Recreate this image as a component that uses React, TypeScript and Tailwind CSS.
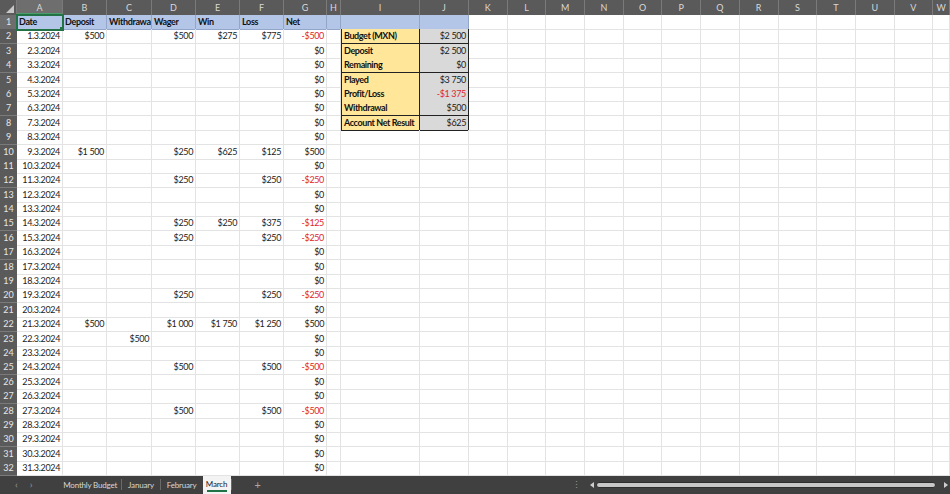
import React from 'react';

// column template: row header, A-J, K-V, W (partial)
const GRID =
  'grid grid-cols-[17px_46px_44px_45px_44px_44px_44px_43px_14px_79px_49px_repeat(12,38.7px)_1fr]';

const LETTERS = ['A', 'B', 'C', 'D', 'E', 'F', 'G', 'H', 'I', 'J', 'K', 'L', 'M', 'N', 'O', 'P', 'Q', 'R', 'S', 'T', 'U', 'V', 'W'];

type Row = { b?: string; c?: string; d?: string; e?: string; f?: string; g: string };

const DAYS: Row[] = [
  { b: '$500', d: '$500', e: '$275', f: '$775', g: '-$500' },
  { g: '$0' },
  { g: '$0' },
  { g: '$0' },
  { g: '$0' },
  { g: '$0' },
  { g: '$0' },
  { g: '$0' },
  { b: '$1 500', d: '$250', e: '$625', f: '$125', g: '$500' },
  { g: '$0' },
  { d: '$250', f: '$250', g: '-$250' },
  { g: '$0' },
  { g: '$0' },
  { d: '$250', e: '$250', f: '$375', g: '-$125' },
  { d: '$250', f: '$250', g: '-$250' },
  { g: '$0' },
  { g: '$0' },
  { g: '$0' },
  { d: '$250', f: '$250', g: '-$250' },
  { g: '$0' },
  { b: '$500', d: '$1 000', e: '$1 750', f: '$1 250', g: '$500' },
  { c: '$500', g: '$0' },
  { g: '$0' },
  { d: '$500', f: '$500', g: '-$500' },
  { g: '$0' },
  { g: '$0' },
  { d: '$500', f: '$500', g: '-$500' },
  { g: '$0' },
  { g: '$0' },
  { g: '$0' },
  { g: '$0' },
];

const SUMMARY: [string, string][] = [
  ['Budget (MXN)', '$2 500'],
  ['Deposit', '$2 500'],
  ['Remaining', '$0'],
  ['Played', '$3 750'],
  ['Profit/Loss', '-$1 375'],
  ['Withdrawal', '$500'],
  ['Account Net Result', '$625'],
];

function Cell({ v, cls = '' }: { v?: string; cls?: string }) {
  const red = v?.startsWith('-');
  return (
    <div
      className={`overflow-hidden whitespace-nowrap border-r border-b border-[#e3e3e3] px-[2px] text-right leading-[14px] ${
        red ? 'text-[#e0262c]' : 'text-[#1c1c1c]'
      } ${cls}`}
    >
      {v}
    </div>
  );
}

function RowHead({ n, active }: { n: number; active?: boolean }) {
  return (
    <div
      className={`border-b border-[#7a7a7a] text-center leading-[14px] tracking-normal text-[#e6e6e6] ${
        active ? 'bg-[#6e6e6e]' : 'bg-[#5a5a5a]'
      }`}
    >
      {n}
    </div>
  );
}

function Sep() {
  return <span className="h-[11px] w-px bg-[#6a6a6a]" />;
}

export default function App() {
  return (
    <div className="flex h-[494px] w-[950px] flex-col overflow-hidden bg-white font-['Lato',sans-serif] text-[9px] tracking-[-0.35px]">
      {/* column headers */}
      <div className={`${GRID} h-[15px] bg-[#5a5a5a] text-[#d8d8d8] tracking-normal`}>
        <div className="relative border-r border-[#7a7a7a]">
          <div className="absolute bottom-[2px] right-[2px] h-0 w-0 border-b-[8px] border-l-[8px] border-b-[#c8c8c8] border-l-transparent" />
        </div>
        {LETTERS.map((l) => (
          <div
            key={l}
            className={`border-r border-[#7a7a7a] text-center leading-[15px] ${
              l === 'A' ? 'bg-[#6e6e6e] shadow-[inset_0_-2px_0_#4d9a6b]' : ''
            }`}
          >
            {l}
          </div>
        ))}
      </div>

      {/* row 1: headings */}
      <div className={`${GRID} h-[14.4px]`}>
        <RowHead n={1} active />
        {['Date', 'Deposit', 'Withdrawal', 'Wager', 'Win', 'Loss', 'Net', '', '', ''].map((h, i) => (
          <div
            key={i}
            className={`overflow-hidden whitespace-nowrap border-r border-b border-[#93a6c9] bg-[#b4c6e7] px-[2px] font-bold leading-[14px] text-[#111] ${
              i === 0 ? 'relative outline outline-2 -outline-offset-1 outline-[#217346]' : ''
            }`}
          >
            {h}
            {i === 0 && <div className="absolute -bottom-[2px] -right-[2px] h-[4px] w-[4px] bg-[#217346]" />}
          </div>
        ))}
        {Array.from({ length: 13 }).map((_, i) => (
          <Cell key={i} />
        ))}
      </div>

      {/* day rows */}
      {DAYS.map((r, i) => {
        const s = SUMMARY[i];
        return (
          <div key={i} className={`${GRID} h-[14.4px]`}>
            <RowHead n={i + 2} />
            <Cell v={`${i + 1}.3.2024`} />
            <Cell v={r.b} />
            <Cell v={r.c} />
            <Cell v={r.d} />
            <Cell v={r.e} />
            <Cell v={r.f} />
            <Cell v={r.g} />
            <Cell />
            {s ? (
              <>
                <div className="overflow-hidden whitespace-nowrap border border-t-0 border-[#222] bg-[#ffe699] px-[2px] font-bold leading-[13px] tracking-[-0.4px] text-[#111]">
                  {s[0]}
                </div>
                <div
                  className={`overflow-hidden whitespace-nowrap border-r border-b border-[#222] bg-[#d9d9d9] px-[2px] text-right leading-[13px] ${
                    s[1].startsWith('-') ? 'text-[#e0262c]' : 'text-[#1c1c1c]'
                  }`}
                >
                  {s[1]}
                </div>
              </>
            ) : (
              <>
                <Cell />
                <Cell />
              </>
            )}
            {Array.from({ length: 13 }).map((_, k) => (
              <Cell key={k} />
            ))}
          </div>
        );
      })}

      {/* sheet tabs */}
      <div className="flex h-[18px] flex-1 items-center bg-[#404040] text-[8px] tracking-[-0.2px] text-[#d6d6d6]">
        <span className="ml-[15px] text-[10px] text-[#9a9a9a]">‹</span>
        <span className="ml-[12px] text-[10px] text-[#9a9a9a]">›</span>
        <span className="ml-[31px] mr-[4px]">Monthly Budget</span>
        <Sep />
        <span className="mx-[6px]">January</span>
        <Sep />
        <span className="ml-[6px]">February</span>
        <span className="ml-[6px] flex h-full w-[28px] flex-col items-center justify-center bg-[#f3f3f3] text-[#222]">
          <span className="leading-[12px]">March</span>
          <span className="h-[1.5px] w-[20px] bg-[#217346]" />
        </span>
        <Sep />
        <span className="ml-[23px] text-[11px] text-[#a8a8a8]">+</span>
        <span className="ml-auto text-[9px] text-[#9a9a9a]">⋮</span>
        <div className="ml-[9px] mr-[2px] flex w-[358px] items-center">
          <span className="h-0 w-0 border-y-[3px] border-r-[4px] border-y-transparent border-r-[#cfcfcf]" />
          <div className="ml-[2px] h-[6px] flex-1 rounded-full border border-[#2e2e2e] bg-[#c8c8c8]" />
          <span className="ml-[8px] h-0 w-0 border-y-[3px] border-l-[4px] border-y-transparent border-l-[#cfcfcf]" />
        </div>
      </div>
    </div>
  );
}
